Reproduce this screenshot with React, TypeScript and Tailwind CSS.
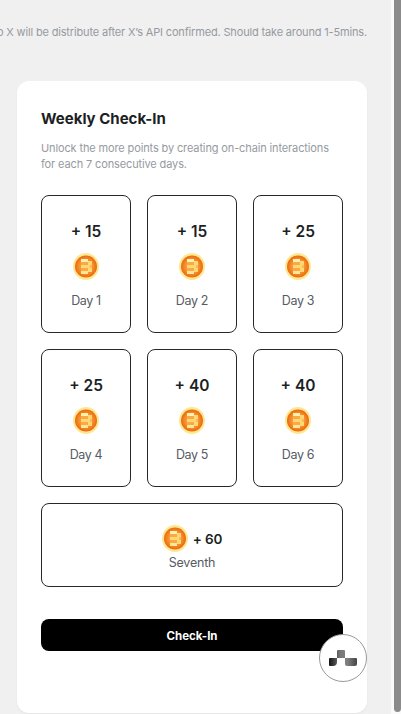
interface CheckInDay {
  label: string;
  points: number;
}

const days: CheckInDay[] = [
  { label: "Day 1", points: 15 },
  { label: "Day 2", points: 15 },
  { label: "Day 3", points: 25 },
  { label: "Day 4", points: 25 },
  { label: "Day 5", points: 40 },
  { label: "Day 6", points: 40 },
];

const CoinIcon = () => (
  <svg width="26" height="27" viewBox="0 0 26 27" className="shrink-0">
    <defs>
      <radialGradient id="coinFill">
        <stop offset="0%" stopColor="#fdb95a" />
        <stop offset="60%" stopColor="#f79234" />
        <stop offset="100%" stopColor="#e96a0c" />
      </radialGradient>
    </defs>
    <ellipse cx="13" cy="13.5" rx="13" ry="13.5" fill="#fde790" />
    <circle cx="13" cy="13.5" r="11" fill="url(#coinFill)" />
    <path fill="#fba945" d="M8 9h8v3H8zM8 15h8v3H8z" />
    <path fill="#fff0ae" d="M8 6h7v3H8z" />
    <path fill="#ffd873" d="M8 12h9v3H8zM15 8h4v4h-4zM15 15h4v4h-4z" />
    <path fill="#ffe795" d="M8 18h7v3H8z" />
    <path fill="#fcb955" d="M17 12h2v3h-2z" />
  </svg>
);

const DayCard = ({ day }: { day: CheckInDay }) => (
  <div className="flex h-[138px] flex-col items-center rounded-lg border border-[#25282d] pt-6">
    <p className="text-[15.5px] leading-6 font-semibold text-[#1c1f24]">
      + {day.points}
    </p>
    <div className="mt-[9px]">
      <CoinIcon />
    </div>
    <p className="mt-[11px] text-[12.5px] leading-5 tracking-[-0.35px] text-[#565b62]">
      {day.label}
    </p>
  </div>
);

const FloatingButton = () => (
  <button className="absolute top-[634px] left-[319px] flex size-12 items-center justify-center rounded-full border border-[#999] bg-white">
    <svg width="28" height="16" viewBox="0 0 28 16">
      <defs>
        <linearGradient id="badgeMark" x1="0" y1="0" x2="1" y2="0">
          <stop offset="0%" stopColor="#141414" />
          <stop offset="40%" stopColor="#777" />
          <stop offset="65%" stopColor="#808080" />
          <stop offset="100%" stopColor="#444" />
        </linearGradient>
      </defs>
      <path
        fill="url(#badgeMark)"
        d="M9 0h6q1 0 1 1v7h11q1 0 1 1v5q0 2-2 2h-8q-2 0-2-2V8H8v4q0 4-4 4H1q-1 0-1-1V9q0-1 1-1h7V1q0-1 1-1z"
      />
    </svg>
  </button>
);

export default function App() {
  return (
    <div className="relative flex h-[714px] w-[401px] overflow-hidden bg-[#fafafa] font-['Inter',sans-serif]">
      <main className="w-[391px] shrink-0 overflow-hidden bg-[#f0f0f0] pr-6 pl-[17px]">
        <div className="flex h-[81px] justify-end pt-6">
          <p className="text-[11px] leading-4 tracking-[-0.16px] whitespace-nowrap text-[#969a9f]">
            to X will be distribute after X’s API confirmed. Should take around
            1-5mins.
          </p>
        </div>

        <section className="h-[632px] rounded-xl bg-white px-6 pt-[26px] shadow-xs">
          <h2 className="text-[15px] leading-6 font-bold text-[#1c1f24]">
            Weekly Check-In
          </h2>
          <p className="mt-[9px] text-[11px] leading-4 tracking-[-0.13px] whitespace-nowrap text-[#969a9f]">
            Unlock the more points by creating on-chain interactions
            <br />
            for each 7 consecutive days.
          </p>

          <div className="mt-[23px] grid grid-cols-3 gap-4">
            {days.map((day) => (
              <DayCard key={day.label} day={day} />
            ))}
            <div className="col-span-3 flex h-[84px] flex-col items-center rounded-lg border border-[#25282d] pt-[21px]">
              <div className="flex items-center gap-[5px]">
                <CoinIcon />
                <p className="text-[13.5px] leading-5 font-semibold tracking-[-0.1px] text-[#1c1f24]">
                  + 60
                </p>
              </div>
              <p className="pt-px text-[12.5px] leading-5 tracking-[-0.2px] text-[#565b62]">
                Seventh
              </p>
            </div>
          </div>

          <button className="mt-8 flex h-8 w-full items-center justify-center rounded-lg bg-black pt-[3px] text-[11.5px] font-bold text-white">
            Check-In
          </button>
        </section>
      </main>

      <div className="ml-[3px] h-[712px] w-[7px] rounded-b bg-[#8b8b8b]" />
      <FloatingButton />
    </div>
  );
}
